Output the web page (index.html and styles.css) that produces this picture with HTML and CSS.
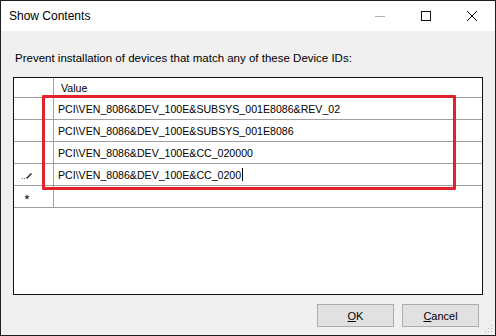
FILE: index.html
```html
<!DOCTYPE html>
<html lang="en">
<head>
  <meta charset="UTF-8" />
  <title>Show Contents</title>
  <link rel="stylesheet" href="styles.css">
</head>
<body>
  <div class="window">
    <div class="titlebar">
      <span class="title">Show Contents</span>
      <div class="controls">
        <span class="ctl min"><svg width="12" height="12" viewBox="0 0 12 12"><path d="M1 6.5h10" stroke="#b0b0b0" stroke-width="1"/></svg></span>
        <span class="ctl"><svg width="12" height="12" viewBox="0 0 12 12"><rect x="1.5" y="1.5" width="9" height="9" fill="none" stroke="#111" stroke-width="1"/></svg></span>
        <span class="ctl"><svg width="12" height="12" viewBox="0 0 12 12"><path d="M1 1L11 11M11 1L1 11" stroke="#111" stroke-width="1"/></svg></span>
      </div>
    </div>

    <div class="content">
      <p class="label">Prevent installation of devices that match any of these Device IDs:</p>

      <div class="grid">
        <div class="row head">
          <div class="rh"></div>
          <div class="cell">Value</div>
        </div>
        <div class="row">
          <div class="rh"></div>
          <div class="cell">PCI\VEN_8086&amp;DEV_100E&amp;SUBSYS_001E8086&amp;REV_02</div>
        </div>
        <div class="row">
          <div class="rh"></div>
          <div class="cell">PCI\VEN_8086&amp;DEV_100E&amp;SUBSYS_001E8086</div>
        </div>
        <div class="row">
          <div class="rh"></div>
          <div class="cell">PCI\VEN_8086&amp;DEV_100E&amp;CC_020000</div>
        </div>
        <div class="row">
          <div class="rh"><svg width="12" height="10" viewBox="0 0 12 10"><path d="M5.5 8.5L10.5 3.5" stroke="#333" stroke-width="1.6"/><rect x="1" y="8" width="1" height="1" fill="#666"/><rect x="3" y="8" width="1" height="1" fill="#666"/></svg></div>
          <div class="cell">PCI\VEN_8086&amp;DEV_100E&amp;CC_0200<span class="caret"></span></div>
        </div>
        <div class="row">
          <div class="rh star"><svg width="6" height="6" viewBox="0 0 6 6"><path d="M3 0.3L3.8 2.1L5.7 2.3L4.3 3.6L4.7 5.6L3 4.6L1.3 5.6L1.7 3.6L0.3 2.3L2.2 2.1Z" fill="#444"/></svg></div>
          <div class="cell"></div>
        </div>
        <div class="filler">
          <div class="rh"></div>
        </div>
        <div class="highlight"></div>
      </div>

      <div class="buttons">
        <button class="btn"><u>O</u>K</button>
        <button class="btn"><u>C</u>ancel</button>
      </div>
    </div>
    <svg class="grip" width="8" height="8" viewBox="0 0 8 8">
      <rect x="6" y="0" width="1" height="1" fill="#b8b8b8"/>
      <rect x="3" y="3" width="1" height="1" fill="#b8b8b8"/>
      <rect x="6" y="3" width="1" height="1" fill="#b8b8b8"/>
      <rect x="0" y="6" width="1" height="1" fill="#b8b8b8"/>
      <rect x="3" y="6" width="1" height="1" fill="#b8b8b8"/>
      <rect x="6" y="6" width="1" height="1" fill="#b8b8b8"/>
    </svg>
  </div>
</body>
</html>
```

FILE: styles.css
```css
body {
  margin: 0;
  font-family: "Liberation Sans", Arial, sans-serif;
  background: #f0f0f0;
}
.window {
  position: relative;
  width: 496px;
  height: 336px;
  box-sizing: border-box;
  border: 1px solid #1e1e1e;
  background: #f0f0f0;
  display: flex;
  flex-direction: column;
}
.titlebar {
  height: 30px;
  background: #fff;
  display: flex;
  align-items: center;
  justify-content: space-between;
}
.title {
  font-size: 12px;
  color: #000;
  padding-left: 8px;
}
.controls {
  display: flex;
  height: 100%;
}
.ctl {
  width: 46px;
  display: flex;
  align-items: center;
  justify-content: center;
}
.content {
  flex: 1;
  display: flex;
  flex-direction: column;
  padding: 0 12px 0 12px;
}
.label {
  margin: 20px 0 0 2px;
  font-size: 11.5px;
  line-height: 14px;
  color: #000;
}
.grid {
  position: relative;
  margin-top: 12px;
  height: 216px;
  border: 1px solid #101010;
  background: #fff;
  display: flex;
  flex-direction: column;
}
.row {
  display: flex;
  height: 21px;
  border-bottom: 1px solid #a0a0a0;
  font-size: 10.6px;
  color: #000;
}
.row.head {
  height: 19px;
}
.rh {
  width: 40px;
  flex-shrink: 0;
  box-sizing: border-box;
  padding-left: 7px;
  border-right: 1px solid #a0a0a0;
  display: flex;
  align-items: center;
}
.rh.star {
  padding-left: 10px;
}
.cell {
  flex: 1;
  display: flex;
  align-items: center;
  padding-left: 4px;
  white-space: nowrap;
}
.row.head .cell {
  padding-left: 7px;
}
.filler {
  flex: 1;
  display: flex;
}
.filler .rh {
  border-right: none;
}
.caret {
  display: inline-block;
  width: 1px;
  height: 13px;
  background: #000;
  margin-left: 1px;
}
.highlight {
  position: absolute;
  left: 28px;
  top: 17px;
  width: 408px;
  height: 89px;
  border: 3px solid #e2232d;
  border-radius: 1px;
  pointer-events: none;
}
.buttons {
  display: flex;
  justify-content: flex-end;
  gap: 8px;
  margin-top: 9px;
  padding-right: 4px;
}
.btn {
  width: 77px;
  height: 23px;
  border: 1px solid #adadad;
  background: #e1e1e1;
  font-family: "Liberation Sans", Arial, sans-serif;
  font-size: 11px;
  color: #000;
  padding: 0;
}
.btn u {
  text-decoration: underline;
}
.grip {
  position: absolute;
  right: 2px;
  bottom: 2px;
}
```
